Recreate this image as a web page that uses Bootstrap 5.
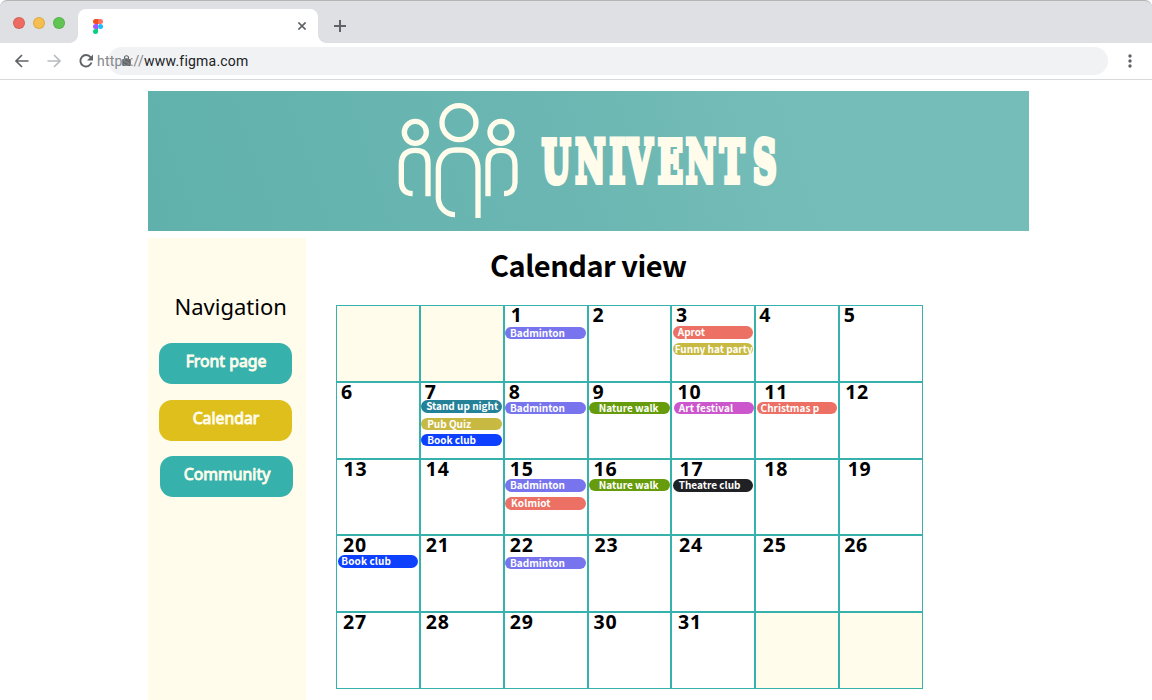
<!DOCTYPE html>
<html lang="en">
<head>
<meta charset="utf-8">
<meta name="viewport" content="width=device-width, initial-scale=1">
<title>Univents</title>
<link href="https://cdn.jsdelivr.net/npm/bootstrap@5.3.0/dist/css/bootstrap.min.css" rel="stylesheet">
<style>
body{font-family:"Noto Sans","Open Sans",sans-serif;color:#000;background:#fff;height:700px;overflow:hidden}
.chrome-tabs{height:43px;background:#dee0e4;border-top:1px solid #b5b5b5;border-radius:7px 7px 0 0}
.lights{width:78px;padding:16px 0 0 13px;gap:8px}
.light-dot{width:12px;height:12px;border-radius:50%;border:1px solid #0000001a}
.tab-open{width:240px;height:34px;margin-top:8px;background:#fff;border-radius:8px 8px 0 0}
.tab-open::before,.tab-open::after{content:"";position:absolute;bottom:0;width:8px;height:8px}
.tab-open::before{left:-8px;background:radial-gradient(circle at 0 0,transparent 7.5px,#fff 8px)}
.tab-open::after{right:-8px;background:radial-gradient(circle at 100% 0,transparent 7.5px,#fff 8px)}
.chrome-bar{height:37px;border-bottom:1px solid #d8d9db}
.omnibox{width:1000px;height:28px;border-radius:14px;background:#f1f2f4;margin-left:14px}
.address{left:97px;top:8px;font:14px/20px Roboto,sans-serif;letter-spacing:.21px;color:#202124}
.address span{color:#85878a}
.page-wrap{width:881px;margin:11px 0 0 148px}
.banner{height:140px;background:linear-gradient(72deg,#60b1ac,#6bb6b2 45%,#75bdb9 75%,#74bdb9)}
.side{width:158px;height:462px;margin-top:7px;background:#fffcec;padding-left:11px}
.side h2{font-size:22px;line-height:30px;font-weight:400;margin:53px 0 22px 15.5px}
.side .btn{width:133px;height:41px;border:0;border-radius:13px;background:#37b1ac;color:#fffcec;font-size:15.8px;line-height:20px;padding:0 0 5px 1px;-webkit-text-stroke:.9px #fffcec;margin-bottom:16px}
.side .btn.here{background:#dfbf1c;margin-bottom:15px}
.side .btn.shifted{margin-left:1px}
.view{margin-left:30px;width:587px}
.view h1{font-family:"Noto Sans CJK JP","Noto Sans",sans-serif;font-size:29px;letter-spacing:-.5px;line-height:40px;font-weight:700;margin:13px 0 21px 154px;white-space:nowrap}
.month{grid-template-columns:repeat(7,1fr);grid-template-rows:repeat(5,1fr);height:384px}
.day{border:1px solid #37b1ac;min-width:0}
.day.blank{background:#fffcec}
.num{font-size:19.5px;line-height:18px;height:20px;font-weight:700;letter-spacing:.8px;white-space:nowrap}
.pill{width:80.5px;border-radius:7px;color:#fff;font-family:"Noto Sans CJK JP","Noto Sans",sans-serif;font-size:10px;line-height:11px;font-weight:700;white-space:nowrap}
.badminton{background:#7774ee}.coral{background:#ec7063}.olive{background:#c8b942}.teal{background:#258198}.blue{background:#0d40ff}.green{background:#669c0b}.orchid{background:#cc57cd}.ink{background:#202124}
</style>
</head>
<body>
<header>
  <div class="chrome-tabs d-flex">
    <div class="lights d-flex">
      <span class="light-dot" style="background:#ed6b60"></span><span class="light-dot" style="background:#f6be50"></span><span class="light-dot" style="background:#61c554"></span>
    </div>
    <div class="tab-open position-relative d-flex justify-content-between align-items-center">
      <svg width="10" height="15" viewBox="0 0 10 15" style="margin-left:15px"><path fill="#f24e1e" d="M5 0H2.5a2.5 2.5 0 0 0 0 5H5z"/><path fill="#ff7262" d="M5 0h2.5a2.5 2.5 0 0 1 0 5H5z"/><path fill="#a259ff" d="M5 5H2.5a2.5 2.5 0 0 0 0 5H5z"/><circle cx="7.5" cy="7.5" r="2.5" fill="#1abcfe"/><path fill="#0acf83" d="M5 10H2.5A2.5 2.5 0 1 0 5 12.500z"/></svg>
      <svg width="8" height="8" viewBox="0 0 8 8" style="margin-right:12px" stroke="#5f6368" stroke-width="1.6"><path d="M.4.4l7.200 7.200M7.600.4L.4 7.600"/></svg>
    </div>
    <svg width="12" height="12" viewBox="0 0 12 12" style="margin:19px 0 0 16px" stroke="#5f6368" stroke-width="2"><path d="M6 0v12M0 6h12"/></svg>
  </div>
  <div class="chrome-bar position-relative d-flex align-items-center">
    <svg width="94" height="24" viewBox="0 49 94 24" fill="none" stroke="#5f6368" stroke-width="1.700"><path d="M28.500 61H16.500M22 55l-6 6 6 6"/><path stroke="#b9bbbe" d="M47.500 61h12M54 55l6 6-6 6"/><path stroke-width="1.900" d="M90.600 57.300A5.700 5.700 0 1 0 91.500 62.500"/><path fill="#5f6368" stroke="none" d="M93 54.500v6h-6z"/></svg>
    <div class="omnibox"><svg width="9" height="12" viewBox="0 0 9 12" style="margin:8px 0 0 14px;display:block"><path fill="#5f6368" d="M1 4h7a.8.8 0 0 1 .8.8V10a1 1 0 0 1-1 1H1.200a1 1 0 0 1-1-1V4.800A.8.8 0 0 1 1 4z"/><path d="M2.500 4.500V2.800a2 2 0 0 1 4 0v1.700" fill="none" stroke="#5f6368" stroke-width="1.100"/></svg></div>
    <svg width="4" height="14" viewBox="0 0 4 14" style="margin-left:20px" fill="#5f6368"><circle cx="2" cy="2" r="1.700"/><circle cx="2" cy="7" r="1.700"/><circle cx="2" cy="12" r="1.700"/></svg>
    <div class="address position-absolute"><span>https://</span>www.figma.com</div>
  </div>
</header>
<main class="page-wrap">
  <div class="banner">
    <svg class="d-block" width="881" height="140" viewBox="148 91 881 140">
      <g transform="translate(380 90) scale(.33333)" fill="none" stroke="#fffcec" stroke-width="16">
        <circle cx="106" cy="127" r="33"/><circle cx="237" cy="98" r="51"/><circle cx="363" cy="127" r="33"/>
        <path d="M144 319V218Q144 181 106 181Q64 181 64 224V278Q66 310 98 311"/>
        <path d="M324 319V218Q324 181 363 181Q405 181 405 224V278Q403 310 372 311"/>
        <path d="M294 384V238C294 203 274 180 245 180H225C195 180 175 204 175 238V325C177 354 199 374 225 374"/>
      </g>
      <text transform="translate(542 182) scale(.56 1)" x="0 60 121 152 207 257 318 377" y="0" font-family="DejaVu Serif" font-weight="700" font-size="58" fill="#fffcec" stroke="#fffcec" stroke-width="6">UNIVENTS</text>
    </svg>
  </div>
  <div class="d-flex">
    <nav class="side flex-shrink-0">
      <h2>Navigation</h2>
      <button class="btn d-block" type="button">Front page</button>
      <button class="btn here d-block" type="button">Calendar</button>
      <button class="btn shifted d-block" type="button">Community</button>
    </nav>
    <section class="view">
      <h1>Calendar view</h1>
      <div class="month d-grid" id="month"></div>
    </section>
  </div>
</main>
<script src="https://cdn.jsdelivr.net/npm/bootstrap@5.3.0/dist/js/bootstrap.bundle.min.js"></script>
<script>
// left inset of each date, in order
const insets=[6,4,3.5,3,3.5, 4,4,4,4,5,8,5, 6.5,5,5,5,7,8,7.500, 6,5,5,6,6.5,6.500,4, 6,5,5,5,5.5];
// date: [label, colour, left, top, height, text inset, letter spacing]
const events={
 1:[['Badminton','badminton',1,21,12,5,0]],
 3:[['Aprot','coral',1,20,13,5,0],['Funny hat party','olive',1,37,12,2,0]],
 7:[['Stand up night','teal',1,17,13,5,0],['Pub Quiz','olive',1,35,12,6,0],['Book club','blue',1,51,12,6,0]],
 8:[['Badminton','badminton',1,19,12,5,0]],
 9:[['Nature walk','green',1,19,12,10,0]],
 10:[['Art festival','orchid',2,19,12,5,.1]],
 11:[['Christmas p','coral',1,19,12,4,0]],
 15:[['Badminton','badminton',1,19,13,5,0],['Kolmiot','coral',1,37,13,6,.1]],
 16:[['Nature walk','green',1,19,12,10,0]],
 17:[['Theatre club','ink',1,19,13,6,0]],
 20:[['Book club','blue',1,19,13,4,.1]],
 22:[['Badminton','badminton',1,21,12,5,0]]
};
let html='';
for(let cell=0;cell<35;cell++){
  const d=cell-1;
  if(d<1||d>31){html+='<div class="day blank"></div>';continue;}
  let bottom=20, pills='';
  for(const [label,tone,left,top,h,pad,ls] of events[d]||[]){
    pills+=`<div class="pill ${tone}" style="margin:${top-bottom}px 0 0 ${left-.5}px;height:${h}px;padding-left:${pad-.2}px;letter-spacing:${ls}px">${label}</div>`;
    bottom=top+h;
  }
  html+=`<div class="day"><div class="num" style="padding-left:${insets[d-1]}px">${d}</div>${pills}</div>`;
}
document.getElementById('month').innerHTML=html;
</script>
</body>
</html>
